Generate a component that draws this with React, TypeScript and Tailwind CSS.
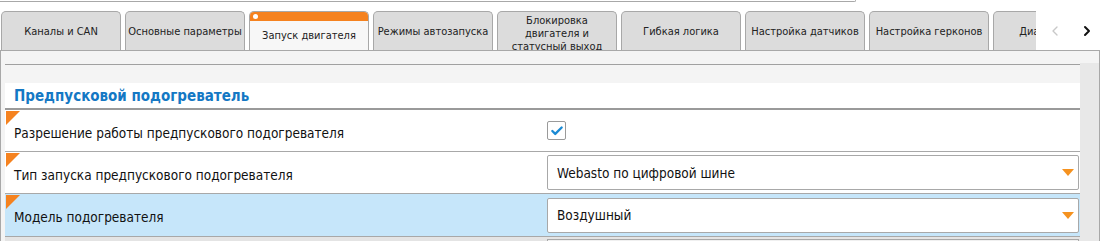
import { Check, ChevronLeft, ChevronRight } from "lucide-react";

const tabs = [
  "Каналы и CAN",
  "Основные параметры",
  "Запуск двигателя",
  "Режимы автозапуска",
  "Блокировка двигателя и статусный выход",
  "Гибкая логика",
  "Настройка датчиков",
  "Настройка герконов",
  "Диагностика",
];

const font = "[font-family:'DejaVu_Sans_Condensed','DejaVu_Sans',sans-serif]";

function Corner() {
  return (
    <span className="absolute left-[1px] top-[1px] w-0 h-0 border-t-[14px] border-r-[14px] border-t-[#f5821f] border-r-transparent" />
  );
}

function Select({ value }: { value: string }) {
  return (
    <div className="w-[532px] h-[35px] bg-white border border-[#a8a8a8] rounded-[2px] flex items-center justify-between pl-[9px] pr-[4px] text-[13.5px] text-[#111]">
      <span className="pt-[1px]">{value}</span>
      <span className="w-0 h-0 border-l-[6px] border-r-[6px] border-t-[7px] border-l-transparent border-r-transparent border-t-[#f5921f]" />
    </div>
  );
}

export default function App() {
  return (
    <div className={`w-[1104px] h-[241px] overflow-hidden bg-white ${font}`}>
      {/* верхняя линия */}
      <div className="h-[2px] w-[856px] border-b border-r border-[#a8a8a8] rounded-br-[3px]" />

      {/* вкладки */}
      <div className="h-[48px] flex items-end">
        <div className="w-[1036px] flex gap-[4px] pl-[1px] overflow-hidden">
          {tabs.map((t, i) =>
            i === 2 ? (
              <div
                key={t}
                className="w-[120px] shrink-0 h-[39px] border border-b-0 border-[#a8a8a8] rounded-t-[5px] bg-[#f7f7f7] overflow-hidden flex flex-col"
              >
                <div className="h-[9px] bg-[#f5821f] flex items-center pl-[3px]">
                  <span className="w-[5px] h-[5px] rounded-full bg-white" />
                </div>
                <div className="flex-1 flex items-center justify-center text-[11px] text-[#222] pt-[2px] whitespace-nowrap">{t}</div>
              </div>
            ) : (
              <div
                key={t}
                className={`w-[120px] shrink-0 h-[39px] border border-b-0 border-[#a8a8a8] rounded-t-[5px] bg-[#dcdcdc] flex items-center justify-center text-center text-[11px] text-[#222] leading-[13px] overflow-hidden ${i === 4 ? "pt-[4px]" : "whitespace-nowrap"}`}
              >
                {i === 4 ? (
                  <span>
                    Блокировка
                    <br />
                    двигателя и
                    <br />
                    статусный выход
                  </span>
                ) : (
                  t
                )}
              </div>
            )
          )}
        </div>
        <div className="flex-1 h-[39px] flex items-center pl-[11px] gap-[16px]">
          <ChevronLeft className="w-[16px] h-[16px] text-[#c8c8c8]" strokeWidth={2} />
          <ChevronRight className="w-[16px] h-[16px] text-[#111]" strokeWidth={3} />
        </div>
      </div>

      {/* панель */}
      <div className="w-[1100px] h-[200px] border border-[#a8a8a8] bg-[#f4f4f4] pt-[12px] pl-[4px]">
        <div className="flex">
          <div className="w-[1075px] pt-[1px]">
            <div className="border-t border-[#a0a0a0] h-[19px]" />
            <div className="h-[25px] bg-white flex items-end pl-[9px] pb-[1px] text-[15px] font-bold text-[#1478c4]">
              Предпусковой подогреватель
            </div>
            <div className="border-t-2 border-[#9a9a9a]" />

            <div className="relative h-[42px] bg-white border-b border-[#a8a8a8] flex items-center">
              <Corner />
              <span className="w-[542px] pl-[9px] pt-[5px] text-[13.5px] text-[#111]">
                Разрешение работы предпускового подогревателя
              </span>
              <span className="w-[19px] h-[19px] bg-white border border-[#9a9a9a] rounded-[2px] flex items-center justify-center">
                <Check className="w-[14px] h-[14px] text-[#1a8ad4]" strokeWidth={4} />
              </span>
            </div>

            <div className="relative h-[42px] bg-white border-b border-[#a8a8a8] flex items-center">
              <Corner />
              <span className="w-[542px] pl-[9px] pt-[5px] text-[13.5px] text-[#111]">
                Тип запуска предпускового подогревателя
              </span>
              <Select value="Webasto по цифровой шине" />
            </div>

            <div className="relative h-[43px] bg-[#c6e6fa] border-b border-[#a8a8a8] flex items-center">
              <Corner />
              <span className="w-[542px] pl-[9px] pt-[4px] text-[13.5px] text-[#111]">
                Модель подогревателя
              </span>
              <Select value="Воздушный" />
            </div>

            <div className="h-[20px] bg-[#e4e4e4] pl-[542px] pt-[2px]">
              <div className="w-[532px] h-[20px] border border-[#a8a8a8] bg-[#f0f0f0]" />
            </div>
          </div>
          <div className="w-[19px] h-[200px] bg-[#e8e8e8]" />
        </div>
      </div>
    </div>
  );
}
